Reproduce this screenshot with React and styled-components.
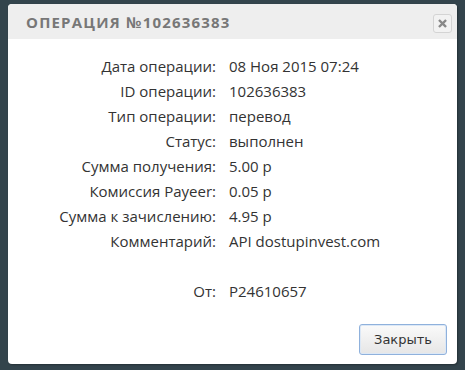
import React from 'react';
import styled, { createGlobalStyle } from 'styled-components';

const GlobalStyle = createGlobalStyle`
  html, body {
    margin: 0;
    padding: 0;
    background: #33444c;
  }
  body {
    font-family: "Open Sans", "Liberation Sans", sans-serif;
  }
`;

const Page = styled.div`
  width: 465px;
  height: 370px;
  padding: 4px 8px 0 8px;
  box-sizing: border-box;
`;

const Dialog = styled.div`
  width: 449px;
  height: 360px;
  background: #fff;
  border-radius: 4px;
  overflow: hidden;
  display: flex;
  flex-direction: column;
  box-shadow: 1px 1px 2px rgba(0, 0, 0, 0.3);
`;

const Header = styled.div`
  height: 35px;
  background: #eeeeee;
  display: flex;
  align-items: center;
  justify-content: space-between;
  padding: 0 5px 0 18px;
`;

const Title = styled.h1`
  margin: 0;
  font-family: "Open Sans", sans-serif;
  font-size: 15px;
  font-weight: 700;
  letter-spacing: 1.2px;
  color: #777;
  text-transform: uppercase;
`;

const CloseBtn = styled.button`
  width: 19px;
  height: 19px;
  padding: 0;
  border: 1px solid #d4d4d4;
  border-radius: 3px;
  background: #f2f2f2;
  display: flex;
  align-items: center;
  justify-content: center;
  margin-top: 4px;
`;

const Body = styled.div`
  flex: 1;
  display: flex;
  flex-direction: column;
  padding: 14px 10px 9px 0;
`;

const Details = styled.div`
  display: grid;
  grid-template-columns: 208px 1fr;
  column-gap: 13px;
  grid-auto-rows: 25px;
  align-items: center;
  font-size: 15px;
  color: #333;
`;

const Label = styled.div`
  text-align: right;
  white-space: nowrap;
`;

const Value = styled.div`
  white-space: nowrap;
`;

const Spacer = styled.div`
  grid-column: 1 / -1;
  height: 27px;
`;

const Footer = styled.div`
  margin-top: auto;
  display: flex;
  justify-content: flex-end;
`;

const Button = styled.button`
  width: 88px;
  height: 31px;
  border: 1px solid #8fb1dc;
  border-radius: 3px;
  background: linear-gradient(#fafafa, #e6e6e6);
  font-family: "DejaVu Sans", "Liberation Sans", sans-serif;
  font-size: 13px;
  color: #333;
  box-shadow: inset 0 0 0 1px #dce8f6;
`;

const rows = [
  ['Дата операции:', '08 Ноя 2015 07:24'],
  ['ID операции:', '102636383'],
  ['Тип операции:', 'перевод'],
  ['Статус:', 'выполнен'],
  ['Сумма получения:', '5.00 р'],
  ['Комиссия Payeer:', '0.05 р'],
  ['Сумма к зачислению:', '4.95 р'],
  ['Комментарий:', 'API dostupinvest.com'],
];

export default function App() {
  return (
    <>
      <GlobalStyle />
      <Page>
        <Dialog>
          <Header>
            <Title>Операция №102636383</Title>
            <CloseBtn aria-label="close">
              <svg width="9" height="9" viewBox="0 0 10 10">
                <path d="M2 2 L8 8 M8 2 L2 8" stroke="#888" strokeWidth="2.6" strokeLinecap="square" />
              </svg>
            </CloseBtn>
          </Header>
          <Body>
            <Details>
              {rows.map(([l, v]) => (
                <React.Fragment key={l}>
                  <Label>{l}</Label>
                  <Value>{v}</Value>
                </React.Fragment>
              ))}
              <Spacer />
              <Label>От:</Label>
              <Value>P24610657</Value>
            </Details>
            <Footer>
              <Button>Закрыть</Button>
            </Footer>
          </Body>
        </Dialog>
      </Page>
    </>
  );
}
